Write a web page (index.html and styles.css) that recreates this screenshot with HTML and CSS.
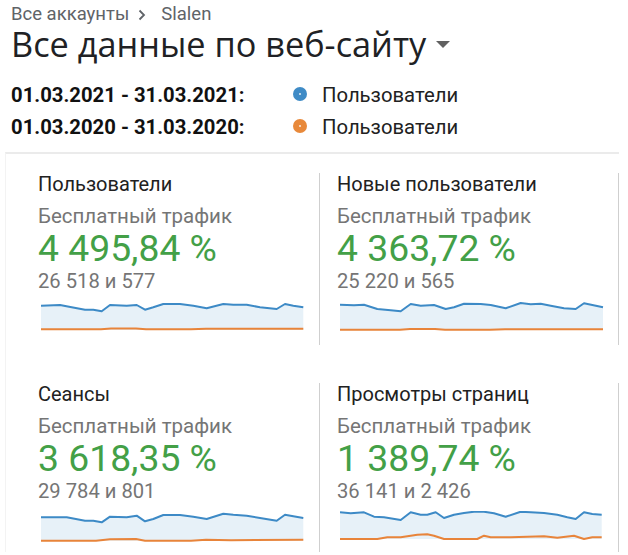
FILE: index.html
```html
<!DOCTYPE html>
<html lang="ru">
<head>
<meta charset="utf-8">
<title>Все данные по веб-сайту</title>
<link rel="stylesheet" href="styles.css">
</head>
<body>
<div class="crumbs">
  <span>Все аккаунты</span>
  <svg class="chev" width="8" height="12" viewBox="0 0 8 12"><path d="M1.5 1.5 L6 6 L1.5 10.5" fill="none" stroke="#5f6368" stroke-width="1.8"/></svg>
  <span>Slalen</span>
</div>
<h1 class="title">Все данные по веб-сайту <span class="caret"></span></h1>
<div class="legend">
  <div class="date">01.03.2021 - 31.03.2021:</div>
  <div class="dot dot-blue"></div>
  <div class="lbl">Пользователи</div>
  <div class="date">01.03.2020 - 31.03.2020:</div>
  <div class="dot dot-orange"></div>
  <div class="lbl">Пользователи</div>
</div>
<div class="panel">
  <div class="grid">
    <div class="card">
      <div class="c-title">Пользователи</div>
      <div class="c-sub">Бесплатный трафик</div>
      <div class="c-big">4 495,84 %</div>
      <div class="c-val">26 518 и 577</div>
      <svg class="spark" width="264" height="32" viewBox="0 0 264 32">
        <path class="area" d="M0 4.7 L19 4 L30.7 6.3 L44 8.7 L52.3 8.7 L60.7 10.3 L69 4 L85.7 4.7 L95.7 4 L104 8.7 L112.3 6.3 L122.3 3 L139 3 L152.3 4.7 L165.7 7.3 L182.3 3 L192.3 3.7 L205.7 3.7 L219 6.3 L235.7 8 L244 3 L252.3 4.7 L262.3 6.3 L262.3 29 L0 29 Z"/>
        <path class="blue" d="M0 4.7 L19 4 L30.7 6.3 L44 8.7 L52.3 8.7 L60.7 10.3 L69 4 L85.7 4.7 L95.7 4 L104 8.7 L112.3 6.3 L122.3 3 L139 3 L152.3 4.7 L165.7 7.3 L182.3 3 L192.3 3.7 L205.7 3.7 L219 6.3 L235.7 8 L244 3 L252.3 4.7 L262.3 6.3"/>
        <path class="orange" d="M0 28.3 L60 28.3 L70 27.6 L95 27.4 L105 28.3 L150 28.3 L165 27.8 L262.3 27.8"/>
      </svg>
    </div>
    <div class="card">
      <div class="c-title">Новые пользователи</div>
      <div class="c-sub">Бесплатный трафик</div>
      <div class="c-big">4 363,72 %</div>
      <div class="c-val">25 220 и 565</div>
      <svg class="spark" width="264" height="32" viewBox="0 0 264 32">
        <path class="area" d="M0 3.7 L14 4.3 L24 3.7 L37.3 8 L50.7 9.3 L60.7 10.3 L70.7 3 L80.7 4.7 L94 4 L105.7 8 L114 6.3 L124 2.7 L140.7 3 L150.7 4 L165.7 7.3 L180.7 2 L190.7 3.3 L200.7 2.7 L210.7 4.7 L224 7.3 L235.7 8 L244 2.3 L263 6.3 L263 29 L0 29 Z"/>
        <path class="blue" d="M0 3.7 L14 4.3 L24 3.7 L37.3 8 L50.7 9.3 L60.7 10.3 L70.7 3 L80.7 4.7 L94 4 L105.7 8 L114 6.3 L124 2.7 L140.7 3 L150.7 4 L165.7 7.3 L180.7 2 L190.7 3.3 L200.7 2.7 L210.7 4.7 L224 7.3 L235.7 8 L244 2.3 L263 6.3"/>
        <path class="orange" d="M0 28.7 L60 28.7 L70 28 L95 27.9 L105 28.7 L150 28.7 L165 28.2 L263 28.2"/>
      </svg>
    </div>
    <div class="card">
      <div class="c-title">Сеансы</div>
      <div class="c-sub">Бесплатный трафик</div>
      <div class="c-big">3 618,35 %</div>
      <div class="c-val">29 784 и 801</div>
      <svg class="spark" width="264" height="32" viewBox="0 0 264 32">
        <path class="area" d="M0 6.3 L25.7 6.3 L44 9.7 L52.3 9.7 L60.7 11.3 L69 5.7 L85.7 6.3 L95.7 4.7 L104 10.3 L112.3 8 L122.3 4 L139 4 L152.3 5.7 L165.7 8 L182.3 2.7 L192.3 3.7 L205.7 4.7 L219 7 L235.7 9.7 L244 3.7 L252.3 5.3 L262.3 7 L262.3 29.7 L0 29.7 Z"/>
        <path class="blue" d="M0 6.3 L25.7 6.3 L44 9.7 L52.3 9.7 L60.7 11.3 L69 5.7 L85.7 6.3 L95.7 4.7 L104 10.3 L112.3 8 L122.3 4 L139 4 L152.3 5.7 L165.7 8 L182.3 2.7 L192.3 3.7 L205.7 4.7 L219 7 L235.7 9.7 L244 3.7 L252.3 5.3 L262.3 7"/>
        <path class="orange" d="M0 29.7 L55 29.7 L69 28.3 L95 28 L104 29.7 L150 29.7 L165 28.8 L190 29.2 L262.3 28.8"/>
      </svg>
    </div>
    <div class="card">
      <div class="c-title">Просмотры страниц</div>
      <div class="c-sub">Бесплатный трафик</div>
      <div class="c-big">1 389,74 %</div>
      <div class="c-val">36 141 и 2 426</div>
      <svg class="spark" width="264" height="32" viewBox="0 0 264 32">
        <path class="area" d="M0 1.3 L10.7 2.3 L24 1.3 L34 5.7 L44 6.3 L60.7 9 L70.7 1.3 L80.7 3.7 L87.3 3.7 L95.7 1.3 L104 7 L114 3.7 L124 2 L134 0.7 L144 0.7 L154 2.3 L165.7 5.7 L180.7 0.7 L190.7 1.3 L204 2 L217.3 3.7 L227.3 6.3 L235.7 8 L244 1.3 L252.3 3 L261.7 3.7 L261.7 28 L0 28 Z"/>
        <path class="blue" d="M0 1.3 L10.7 2.3 L24 1.3 L34 5.7 L44 6.3 L60.7 9 L70.7 1.3 L80.7 3.7 L87.3 3.7 L95.7 1.3 L104 7 L114 3.7 L124 2 L134 0.7 L144 0.7 L154 2.3 L165.7 5.7 L180.7 0.7 L190.7 1.3 L204 2 L217.3 3.7 L227.3 6.3 L235.7 8 L244 1.3 L252.3 3 L261.7 3.7"/>
        <path class="orange" d="M0 28 L37.3 28 L47.3 26.3 L60.7 26.3 L70.7 24.7 L77.3 23.7 L87.3 23.3 L94 24.7 L104 28 L137.3 28 L144 24.7 L150.7 26.3 L170.7 26.3 L204 25.3 L217.3 26.7 L234 24.7 L244 28 L252.3 26.3 L261.7 26.3"/>
      </svg>
    </div>
  </div>
</div>
</body>
</html>
```
FILE: styles.css
```css
* { box-sizing: border-box; }
html, body { margin: 0; padding: 0; background: #ffffff; }
body {
  font-family: Roboto, "Noto Sans", Arial, sans-serif;
  padding-top: 5px;
  overflow: hidden;
}
.crumbs {
  padding-left: 11px;
  display: flex;
  align-items: center;
  font-size: 18.5px;
  line-height: 18px;
  height: 18px;
  color: #5f6368;
}
.chev { display: block; margin: 1px 15px 0 9px; }
.title {
  margin: 0;
  padding-left: 11px;
  font-family: "Open Sans", Roboto, sans-serif;
  font-size: 34.3px;
  line-height: 42px;
  font-weight: 400;
  color: #202124;
  display: flex;
  align-items: center;
}
.caret {
  display: inline-block;
  width: 0; height: 0;
  margin-left: 10px;
  margin-top: 1px;
  border-left: 7.5px solid transparent;
  border-right: 7.5px solid transparent;
  border-top: 7px solid #616161;
}
.legend {
  margin-top: 14px;
  padding-left: 11px;
  display: grid;
  grid-template-columns: 274px 14px auto;
  column-gap: 8px;
  align-items: center;
  font-size: 20.3px;
  line-height: 32px;
  color: #1a1a1a;
}
.date { font-weight: 700; color: #111; }
.lbl { color: #212121; margin-left: 7px; }
.dot {
  width: 14px; height: 14px;
  border-radius: 50%;
  position: relative;
  margin-top: -2px;
}
.dot::after {
  content: "";
  position: absolute;
  left: 6px; top: 6px;
  width: 2px; height: 2px;
  background: rgba(255,255,255,0.85);
  border-radius: 50%;
}
.dot-blue { background: #3f8bc6; }
.dot-orange { background: #e8893a; }
.panel {
  margin: 9px 0 0 5px;
  width: 614px;
  border-top: 2px solid #ebebeb;
  border-left: 1px solid #f3f3f3;
  padding: 19px 0 0 15px;
  height: 400px;
}
.grid {
  display: grid;
  grid-template-columns: 299px 299px;
  row-gap: 38px;
}
.card {
  border-right: 1px solid #cfcfcf;
  padding: 0 0 12px 17px;
}
.c-title {
  font-size: 20px;
  line-height: 22px;
  color: #212121;
}
.c-sub {
  margin-top: 9px;
  font-size: 20.5px;
  line-height: 24px;
  color: #757575;
}
.c-big {
  font-size: 37.3px;
  line-height: 40px;
  color: #43a047;
}
.c-val {
  margin-top: 2px;
  font-size: 20.2px;
  line-height: 22px;
  color: #757575;
}
.spark {
  display: block;
  margin: 9px 0 0 3px;
}
.area { fill: #e7f1f8; stroke: none; }
.blue { fill: none; stroke: #3d8ac6; stroke-width: 2; stroke-linejoin: round; }
.orange { fill: none; stroke: #e8843a; stroke-width: 2; stroke-linejoin: round; }
```
